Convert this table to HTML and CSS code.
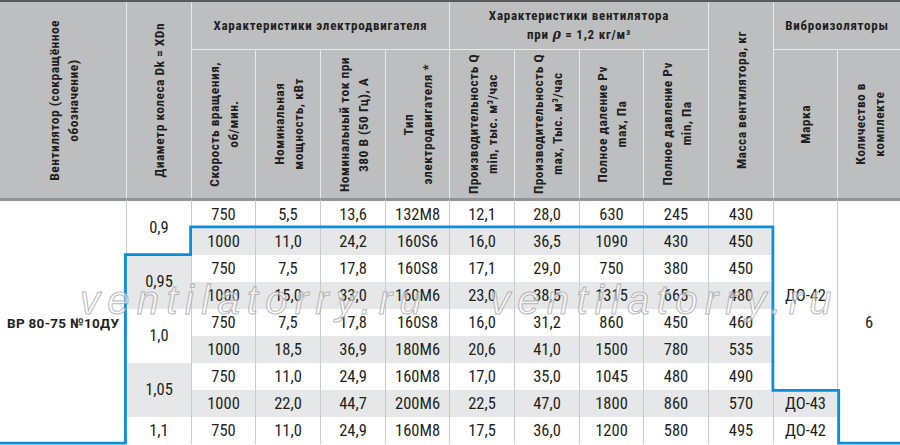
FILE: index.html
```html
<!DOCTYPE html>
<html lang="ru">
<head>
<meta charset="utf-8">
<title>ВР 80-75 №10ДУ</title>
<link rel="stylesheet" href="styles.css">
</head>
<body>
<div class="sheet">
  <table class="spec">
    <colgroup>
      <col class="c-fan"><col class="c65"><col class="c64"><col class="c65"><col class="c65"><col class="c64"><col class="c65"><col class="c65"><col class="c64"><col class="c65"><col class="c65"><col class="c64"><col class="c-last">
    </colgroup>
    <thead>
      <tr class="hr1">
        <th rowspan="2" class="v"><span class="vt">Вентилятор (сокращённое<br>обозначение)</span></th>
        <th rowspan="2" class="v"><span class="vt">Диаметр колеса Dk = XDn</span></th>
        <th colspan="4" class="grp">Характеристики электродвигателя</th>
        <th colspan="4" class="grp">Характеристики вентилятора<br>при <span class="rho">ρ</span> = 1,2 кг/м³</th>
        <th rowspan="2" class="v"><span class="vt">Масса вентилятора, кг</span></th>
        <th colspan="2" class="grp end">Виброизоляторы</th>
      </tr>
      <tr class="hr2">
        <th class="v"><span class="vt">Скорость вращения,<br>об/мин.</span></th>
        <th class="v"><span class="vt">Номинальная<br>мощность, кВт</span></th>
        <th class="v"><span class="vt">Номинальный ток при<br>380 В (50 Гц), А</span></th>
        <th class="v"><span class="vt">Тип<br>электродвигателя *</span></th>
        <th class="v"><span class="vt">Производительность Q<br>min, тыс. м³/час</span></th>
        <th class="v"><span class="vt">Производительность Q<br>max, Тыс. м³/час</span></th>
        <th class="v"><span class="vt">Полное даление Pv<br>max, Па</span></th>
        <th class="v"><span class="vt">Полное давление Pv<br>min, Па</span></th>
        <th class="v"><span class="vt">Марка</span></th>
        <th class="v end"><span class="vt">Количество в<br>комплекте</span></th>
      </tr>
    </thead>
    <tbody>
      <tr class="first">
        <td rowspan="9" class="model">ВР 80-75 №10ДУ</td>
        <td rowspan="2">0,9</td>
        <td>750</td><td>5,5</td><td>13,6</td><td>132M8</td><td>12,1</td><td>28,0</td><td>630</td><td>245</td><td>430</td>
        <td rowspan="7">ДО-42</td>
        <td rowspan="9" class="end">6</td>
      </tr>
      <tr class="g">
        <td>1000</td><td>11,0</td><td>24,2</td><td>160S6</td><td>16,0</td><td>36,5</td><td>1090</td><td>430</td><td>450</td>
      </tr>
      <tr>
        <td rowspan="2" class="gr">0,95</td>
        <td>750</td><td>7,5</td><td>17,8</td><td>160S8</td><td>17,1</td><td>29,0</td><td>750</td><td>380</td><td>450</td>
      </tr>
      <tr class="g">
        <td>1000</td><td>15,0</td><td>33,0</td><td>160M6</td><td>23,0</td><td>38,5</td><td>1315</td><td>665</td><td>480</td>
      </tr>
      <tr>
        <td rowspan="2">1,0</td>
        <td>750</td><td>7,5</td><td>17,8</td><td>160S8</td><td>16,0</td><td>31,2</td><td>860</td><td>450</td><td>460</td>
      </tr>
      <tr class="g">
        <td>1000</td><td>18,5</td><td>36,9</td><td>180M6</td><td>20,6</td><td>41,0</td><td>1500</td><td>780</td><td>535</td>
      </tr>
      <tr>
        <td rowspan="2" class="gr">1,05</td>
        <td>750</td><td>11,0</td><td>24,9</td><td>160M8</td><td>17,0</td><td>35,0</td><td>1045</td><td>480</td><td>490</td>
      </tr>
      <tr class="g">
        <td>1000</td><td>22,0</td><td>44,7</td><td>200M6</td><td>22,5</td><td>47,0</td><td>1800</td><td>860</td><td>570</td>
        <td>ДО-43</td>
      </tr>
      <tr>
        <td>1,1</td>
        <td>750</td><td>11,0</td><td>24,9</td><td>160M8</td><td>17,5</td><td>36,0</td><td>1200</td><td>580</td><td>495</td>
        <td>ДО-42</td>
      </tr>
    </tbody>
  </table>

  <svg class="steps" width="900" height="445" viewBox="0 0 900 445" aria-hidden="true">
    <path d="M0 443.2 H125.4 V254.6 H190.6 V226.9 H772.9 V390.4 H838.7 V443.2 H900" fill="none" stroke="#0a8fdb" stroke-width="2.8" stroke-linejoin="miter"/>
  </svg>

  <span class="wm wm-a">ventilatorry.ru</span>
  <span class="wm wm-b">ventilatorry.ru</span>
</div>
</body>
</html>
```
FILE: styles.css
```css
html, body {
  margin: 0;
  padding: 0;
  background: #ffffff;
}

.sheet {
  position: relative;
  width: 900px;
  height: 445px;
  overflow: hidden;
}

.spec {
  width: 900px;
  table-layout: fixed;
  border-collapse: separate;
  border-spacing: 0;
  border-top: 2px solid #58595b;
  color: #231f20;
}

.c-fan { width: 127px; }
.c65 { width: 65px; }
.c64 { width: 64px; }
.c-last { width: 62px; }

/* ---------- header ---------- */
.spec th {
  background: #bcbec0;
  padding: 0;
  border-right: 1px solid #e9e9ea;
  font-family: "Roboto", "Liberation Sans", sans-serif;
  font-weight: 700;
  font-stretch: 80%;
  text-align: center;
  vertical-align: middle;
}

.spec th.end { border-right: 0; }

.hr1 { height: 48px; }
.hr2 { height: 148px; }

.grp {
  border-bottom: 1px solid #e9e9ea;
  font-size: 13px;
  line-height: 18px;
  letter-spacing: 0.75px;
}

.rho {
  font-family: "DejaVu Serif", serif;
  font-style: italic;
  font-size: 14px;
}

.spec th.v {
  font-size: 0;
  line-height: 0;
}

.vt {
  display: inline-block;
  writing-mode: vertical-rl;
  transform: rotate(180deg);
  vertical-align: middle;
  font-size: 13.5px;
  line-height: 18.5px;
  letter-spacing: 0.45px;
  text-align: center;
  white-space: nowrap;
}

/* ---------- body ---------- */
.spec td {
  padding: 0;
  height: 27px;
  border-right: 1px solid #c9cacb;
  font-family: "Roboto", "Liberation Sans", sans-serif;
  font-stretch: 80%;
  font-size: 16.5px;
  line-height: 20px;
  text-align: center;
  vertical-align: middle;
  background: #ffffff;
}

.spec tr.first td {
  border-top: 3px solid #939496;
}

.spec td.end { border-right: 0; }

.spec tr.g td,
.spec td.gr {
  background: #e6e7e8;
}

.spec td.model {
  text-align: left;
  padding-left: 7px;
  font-weight: 700;
  font-stretch: 88%;
  font-size: 13.5px;
  letter-spacing: 0.3px;
}

/* ---------- overlays ---------- */
.steps {
  position: absolute;
  left: 0;
  top: 0;
  pointer-events: none;
}

.wm {
  position: absolute;
  top: 280px;
  font-family: "Liberation Sans", Arial, sans-serif;
  font-style: italic;
  font-size: 40px;
  line-height: 40px;
  letter-spacing: 7.3px;
  color: rgba(255, 255, 255, 0.55);
  -webkit-text-stroke: 1px rgba(160, 160, 162, 0.75);
  white-space: nowrap;
  pointer-events: none;
}

.wm-a { left: 80px; }
.wm-b { left: 490px; }
```
